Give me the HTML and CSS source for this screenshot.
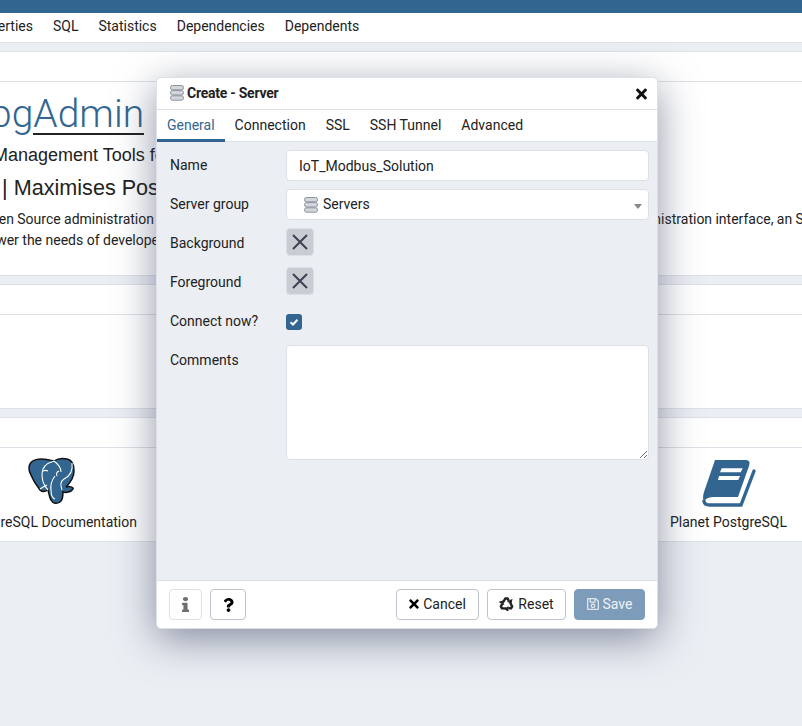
FILE: index.html
```html
<!DOCTYPE html>
<html lang="en">
<head>
  <meta charset="UTF-8">
  <meta name="viewport" content="width=device-width, initial-scale=1.0">
  <title>pgAdmin - Create Server</title>
  <link rel="stylesheet" href="styles.css">
</head>
<body>
  <svg class="defs" width="0" height="0">
    <symbol id="server" viewBox="0 0 14 16">
      <rect x="0.5" y="0.5" width="13" height="4.4" rx="2" fill="#d3d6dc" stroke="#8d929b"/>
      <rect x="0.5" y="5.6" width="13" height="4.4" rx="2" fill="#d3d6dc" stroke="#8d929b"/>
      <rect x="0.5" y="10.8" width="13" height="4.4" rx="2" fill="#d3d6dc" stroke="#8d929b"/>
    </symbol>
    <symbol id="times" viewBox="0 0 352 512">
      <path d="M242.72 256l100.07-100.07c12.28-12.28 12.28-32.19 0-44.48l-22.24-22.24c-12.28-12.28-32.19-12.28-44.48 0L176 189.28 75.93 89.21c-12.28-12.28-32.19-12.28-44.48 0L9.21 111.45c-12.28 12.28-12.28 32.19 0 44.48L109.28 256 9.21 356.07c-12.28 12.28-12.28 32.19 0 44.48l22.24 22.24c12.28 12.28 32.2 12.28 44.48 0L176 322.72l100.07 100.07c12.28 12.28 32.2 12.28 44.48 0l22.24-22.24c12.28-12.28 12.28-32.19 0-44.48L242.72 256z"/>
    </symbol>
  </svg>

  <div class="topbar"></div>
  <div class="tabstrip">
    <a>Properties</a>
    <a>SQL</a>
    <a>Statistics</a>
    <a>Dependencies</a>
    <a>Dependents</a>
  </div>

  <main class="dashboard">
    <section class="panel">
      <div class="panel-head"></div>
      <div class="welcome">
        <h1 class="title">pg<span class="title-link">Admin</span></h1>
        <h4 class="subtitle">Management Tools for PostgreSQL</h4>
        <h4 class="tagline">Feature Rich | Maximises PostgreSQL Native Features</h4>
        <p class="intro intro-one">pgAdmin is an Open Source administration and management tool for the PostgreSQL database. It includes a graphical administration interface, an SQL query tool</p>
        <p class="intro intro-two">The tool is designed to answer the needs of developers, DBAs and system administrators alike.</p>
      </div>
    </section>

    <section class="panel panel-short">
      <div class="panel-head"></div>
    </section>

    <section class="panel panel-short">
      <div class="panel-head"></div>
      <div class="links">
        <div class="link">
          <svg class="link-icon" width="58" height="58" viewBox="0 0 58 58">
            <path d="M7 15C8 9 14 7 19 7 23 7 28 8 32 9 35 7 40 6 45 7 50 8 52 13 52 19 52 25 49 30 44 35 47 34 52 35 51 37 49 40 44 41 41 40 41 44 41 48 38 50 35 52 31 52 29 48 27 45 27 41 26 38 23 40 20 40 18 38 14 33 10 26 8 21 7 19 7 17 7 15Z" fill="#326690" stroke="#111" stroke-width="1.500"/>
            <path d="M32 9C25 11 20 15 20 22 20 29 23 35 26 38M33 24C30 28 28 32 29 38 29 42 30 46 33 47M32 9C36 12 39 16 39 20M50 11C51 18 48 24 42 27 39 29 38 33 40 38M18 37C21 35 23 34 25 33M20 20C22 18 24 18 26 19M37 19C35 20 34 22 35 24" fill="none" stroke="#fff" stroke-width="1.100"/>
          </svg>
          <span>PostgreSQL Documentation</span>
        </div>
        <div class="link"><span>pgAdmin Website</span></div>
        <div class="link"><span>Community Support</span></div>
        <div class="link">
          <svg class="link-icon" width="58" height="58" viewBox="50 12 58 58">
            <path d="M65 20H96q5 0 3 6L88 57H64q-7 0-10 4l-1-3q0-3 1-6z" fill="#326690"/>
            <path d="M104 31L91 65H60q-6 0-6-4" fill="none" stroke="#326690" stroke-width="3.400" stroke-linecap="round"/>
            <path d="M71.700 28.300H92.700L90.700 32.300H70zM69 36H90L88.300 40H68z" fill="#fff"/>
          </svg>
          <span>Planet PostgreSQL</span>
        </div>
      </div>
    </section>
  </main>

  <div class="dialog">
    <header class="dialog-head">
      <svg class="server-icon" width="14" height="16"><use href="#server"/></svg>
      <span class="dialog-title">Create - Server</span>
      <svg class="dialog-close" width="11" height="16"><use href="#times"/></svg>
    </header>
    <nav class="dialog-tabs">
      <a class="active">General</a>
      <a>Connection</a>
      <a>SSL</a>
      <a>SSH Tunnel</a>
      <a>Advanced</a>
    </nav>
    <form class="dialog-body">
      <label>Name</label>
      <div class="field">IoT_Modbus_Solution</div>

      <label>Server group</label>
      <div class="field field-select">
        <svg class="server-icon" width="14" height="16"><use href="#server"/></svg>
        <span class="select-text">Servers</span>
        <i class="caret"></i>
      </div>

      <label>Background</label>
      <div class="swatch-cell"><div class="swatch"><svg width="18" height="18" viewBox="0 0 18 18"><path d="M2 2L16 16M16 2L2 16" stroke="#3e4154" stroke-width="2"/></svg></div></div>

      <label>Foreground</label>
      <div class="swatch-cell"><div class="swatch"><svg width="18" height="18" viewBox="0 0 18 18"><path d="M2 2L16 16M16 2L2 16" stroke="#3e4154" stroke-width="2"/></svg></div></div>

      <label>Connect now?</label>
      <div class="check-cell"><div class="check"><svg width="10" height="10" viewBox="0 0 10 10"><path d="M1.500 5.200L4 7.500L8.500 2.800" fill="none" stroke="#fff" stroke-width="2"/></svg></div></div>

      <label>Comments</label>
      <div class="field field-area">
        <svg class="grip" width="8" height="8" viewBox="0 0 8 8"><path d="M1 8L8 1M5 8L8 5" stroke="#6b6f78"/></svg>
      </div>
    </form>
    <footer class="dialog-foot">
      <button type="button" class="btn btn-icon btn-muted">
        <svg width="7" height="15" viewBox="0 0 192 512" preserveAspectRatio="none"><path d="M20 424.229h20V279.771H20c-11.046 0-20-8.954-20-20V212c0-11.046 8.954-20 20-20h112c11.046 0 20 8.954 20 20v212.229h20c11.046 0 20 8.954 20 20V492c0 11.046-8.954 20-20 20H20c-11.046 0-20-8.954-20-20v-47.771c0-11.046 8.954-20 20-20zM96 0C56.235 0 24 32.235 24 72s32.235 72 72 72 72-32.235 72-72S135.764 0 96 0z"/></svg>
      </button>
      <button type="button" class="btn btn-icon btn-help">
        <svg width="11" height="14" viewBox="0 0 384 512"><path d="M202.021 0C122.202 0 70.503 32.703 29.914 91.026c-7.363 10.58-5.093 25.086 5.178 32.874l43.138 32.709c10.373 7.865 25.132 6.026 33.253-4.148 25.049-31.381 43.63-49.449 82.757-49.449 30.764 0 68.816 19.799 68.816 49.631 0 22.552-18.617 34.134-48.993 51.164-35.423 19.86-82.299 44.576-82.299 106.405V320c0 13.255 10.745 24 24 24h72.471c13.255 0 24-10.745 24-24v-5.773c0-42.86 125.268-44.645 125.268-160.627C377.504 66.256 286.902 0 202.021 0zM192 373.459c-38.196 0-69.271 31.075-69.271 69.271 0 38.195 31.075 69.27 69.271 69.27s69.271-31.075 69.271-69.271-31.075-69.27-69.271-69.27z"/></svg>
      </button>
      <span class="foot-space"></span>
      <button type="button" class="btn btn-cancel">
        <svg width="10" height="14"><use href="#times"/></svg>
        Cancel
      </button>
      <button type="button" class="btn btn-reset">
        <svg width="15" height="15" viewBox="0 0 16 16">
          <g id="recycle-arm">
            <path d="M4.200 6.800L6.900 2.600H9.100L10.600 5.200" fill="none" stroke="#222" stroke-width="2.600"/>
            <path d="M8.300 6.400L13.400 7.600L14.400 2.900z" fill="#222"/>
          </g>
          <use href="#recycle-arm" transform="rotate(120 8 8.900)"/>
          <use href="#recycle-arm" transform="rotate(240 8 8.900)"/>
        </svg>
        Reset
      </button>
      <button type="button" class="btn btn-save">
        <svg width="12" height="14" viewBox="0 0 448 512"><path d="M433.941 129.941l-83.882-83.882A48 48 0 0 0 316.118 32H48C21.49 32 0 53.49 0 80v352c0 26.51 21.49 48 48 48h352c26.51 0 48-21.49 48-48V163.882a48 48 0 0 0-14.059-33.941zM272 80v80H144V80h128zm122 352H54a6 6 0 0 1-6-6V86a6 6 0 0 1 6-6h42v104c0 13.255 10.745 24 24 24h176c13.255 0 24-10.745 24-24V83.882l78.243 78.243a6 6 0 0 1 1.757 4.243V426a6 6 0 0 1-6 6zM224 232c-48.523 0-88 39.477-88 88s39.477 88 88 88 88-39.477 88-88-39.477-88-88-88zm0 128c-22.056 0-40-17.944-40-40s17.944-40 40-40 40 17.944 40 40-17.944 40-40 40z"/></svg>
        Save
      </button>
    </footer>
  </div>
</body>
</html>
```

FILE: styles.css
```css
html,
body {
  height: 100%;
}

body {
  margin: 0;
  overflow: hidden;
  background-color: #ebeef3;
  color: #222222;
  font-family: Roboto, sans-serif;
  font-size: 14px;
}

.defs {
  position: absolute;
}

.topbar {
  height: 13px;
  background-color: #326690;
}

.tabstrip {
  display: flex;
  gap: 20px;
  height: 30px;
  align-items: center;
  margin-left: -31.5px;
  padding-bottom: 4px;
  box-sizing: border-box;
  width: 900px;
  background: white;
  border-bottom: 1px solid #dde0e6;
}

.dashboard {
  display: flex;
  flex-direction: column;
  gap: 8px;
  padding-top: 8px;
}

.panel {
  box-sizing: border-box;
  background: white;
  border-top: 1px solid #dde0e6;
  border-bottom: 1px solid #dde0e6;
  height: 225px;
  overflow: hidden;
}

.panel-short {
  height: 125px;
}

.panel-head {
  height: 30px;
  box-sizing: content-box;
  margin-top: -1px;
  border-bottom: 1px solid #dde0e6;
}

.welcome {
  white-space: nowrap;
}

.title {
  margin: 7px 0 0 -10px;
  font-family: Roboto, sans-serif;
  font-size: 39px;
  font-weight: 300;
  line-height: 50px;
  color: #326690;
}

.title-link {
  border-bottom: 2px solid #222222;
  display: inline-block;
  line-height: 38px;
}

.subtitle {
  margin: 3px 0 0 -7px;
  font-family: "Liberation Sans", Arial, sans-serif;
  font-size: 18px;
  font-weight: 400;
  line-height: 26px;
}

.tagline {
  margin: 7px 0 0 -127.5px;
  font-family: "Liberation Sans", Arial, sans-serif;
  font-size: 21.6px;
  font-weight: 400;
  line-height: 26px;
}

.intro {
  margin: 0;
  line-height: 21px;
}

.intro-one {
  margin: 8px 0 0 -111px;
  word-spacing: -0.1px;
}

.intro-two {
  margin-left: -171px;
}

.links {
  display: grid;
  grid-template-columns: repeat(4, 226px);
  margin-left: -62.5px;
  width: 904px;
}

.link {
  display: flex;
  flex-direction: column;
  align-items: center;
  padding-top: 4px;
  height: 93px;
  box-sizing: border-box;
  white-space: nowrap;
}

.link-icon {
  margin-bottom: 4px;
}

.dialog {
  position: absolute;
  left: 156px;
  top: 77px;
  width: 502px;
  height: 552px;
  display: flex;
  flex-direction: column;
  box-sizing: border-box;
  background: white;
  border: 1px solid #dde0e6;
  border-radius: 5px;
  box-shadow: 0 10px 40px rgba(50, 60, 90, 0.55);
}

.dialog-head {
  display: flex;
  align-items: center;
  height: 32px;
  padding: 0 10px 1px 13px;
  box-sizing: border-box;
  border-bottom: 1px solid #dde0e6;
  flex: none;
}

.server-icon {
  flex: none;
}

.dialog-title {
  margin-left: 3px;
  font-weight: 700;
  letter-spacing: -0.25px;
  flex: 1;
}

.dialog-close {
  margin-top: 2px;
  fill: #111111;
}

.dialog-tabs {
  display: flex;
  flex: none;
  height: 31px;
  border-bottom: 1px solid #dde0e6;
}

.dialog-tabs a {
  padding: 0 10px;
  line-height: 30px;
}

.dialog-tabs .active {
  color: #326690;
  border-bottom: 3px solid #326690;
  height: 29px;
}

.dialog-body {
  flex: 1;
  display: grid;
  grid-template-columns: 116px 363px;
  grid-auto-rows: min-content;
  row-gap: 8px;
  align-content: start;
  padding: 8px 0 0 13px;
  background-color: #ebeef3;
}

.dialog-body label {
  line-height: 30px;
}

.field {
  display: flex;
  align-items: center;
  height: 31px;
  padding-left: 12px;
  box-sizing: border-box;
  background: white;
  border: 1px solid #dde0e6;
  border-radius: 4px;
}

.field-select {
  padding-left: 17px;
  gap: 5px;
  position: relative;
}

.select-text {
  margin-top: -2px;
}

.caret {
  position: absolute;
  right: 6px;
  top: 14px;
  border-top: 5px solid #888888;
  border-left: 4px solid transparent;
  border-right: 4px solid transparent;
}

.field-area {
  height: 115px;
  position: relative;
}

.grip {
  position: absolute;
  right: 1px;
  bottom: 1px;
}

.swatch-cell,
.check-cell {
  height: 31px;
  display: flex;
  align-items: flex-start;
}

.check-cell {
  align-items: center;
}

.swatch {
  width: 28px;
  height: 28px;
  display: flex;
  align-items: center;
  justify-content: center;
  background-color: #c9ccd2;
  border: 1px solid #dde0e6;
  border-radius: 4px;
  box-sizing: border-box;
}

.check {
  width: 16px;
  height: 16px;
  display: flex;
  align-items: center;
  justify-content: center;
  background-color: #326690;
  border-radius: 3px;
}

.dialog-foot {
  display: flex;
  flex: none;
  align-items: center;
  gap: 8px;
  height: 47px;
  padding: 0 12px;
  border-top: 1px solid #dde0e6;
  border-radius: 0 0 5px 5px;
  background: white;
}

.foot-space {
  flex: 1;
}

.btn {
  display: flex;
  align-items: center;
  justify-content: center;
  gap: 4px;
  height: 31px;
  padding: 0 0 2px;
  background: white;
  color: #222222;
  border: 1px solid #c0c4cf;
  border-radius: 4px;
  font-family: Roboto, sans-serif;
  font-size: 14px;
}

.btn-icon {
  width: 33px;
  padding-bottom: 0;
}

.btn-muted {
  border-color: #dde0e6;
  fill: #6f6f6f;
}

.btn-help {
  width: 36px;
}

.btn-cancel {
  width: 83px;
}

.btn-reset {
  width: 79px;
}

.btn-save {
  width: 71px;
  background-color: #7d9cb9;
  border-color: #7d9cb9;
  color: #eef2f6;
  fill: #dfe6ee;
}
```
